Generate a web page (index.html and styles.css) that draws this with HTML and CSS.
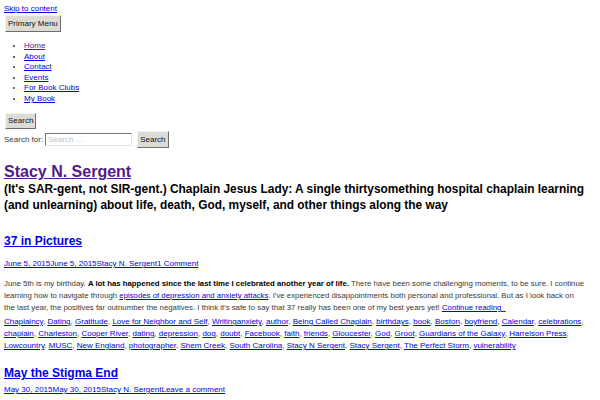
FILE: index.html
```html
<!DOCTYPE html>
<html lang="en">
<head>
<meta charset="utf-8">
<title>Stacy N. Sergent</title>
<link rel="stylesheet" href="styles.css">
</head>
<body>
<a class="skip" href="#content">Skip to content</a>
<header class="site-header">
  <nav class="main-nav">
    <button class="btn menu-toggle" type="button">Primary Menu</button>
    <ul class="menu">
      <li><a class="visited" href="#">Home</a></li>
      <li><a href="#">About</a></li>
      <li><a href="#">Contact</a></li>
      <li><a href="#">Events</a></li>
      <li><a href="#">For Book Clubs</a></li>
      <li><a href="#">My Book</a></li>
    </ul>
  </nav>
  <button class="btn search-toggle" type="button">Search</button>
  <form class="search-form">
    <label class="search-label">Search for: <input class="search-field" type="search" placeholder="Search …"></label>
    <button class="btn search-submit" type="button">Search</button>
  </form>
  <p class="site-title"><a class="visited" href="#">Stacy N. Sergent</a></p>
  <p class="site-description">(It's SAR-gent, not SIR-gent.) Chaplain Jesus Lady: A single thirtysomething hospital chaplain learning (and unlearning) about life, death, God, myself, and other things along the way</p>
</header>
<main id="content" class="content">
  <article class="post">
    <h2 class="entry-title"><a href="#">37 in Pictures</a></h2>
    <div class="entry-meta"><a href="#">June 5, 2015June 5, 2015</a><a href="#">Stacy N. Sergent</a><a href="#">1 Comment</a></div>
    <p class="entry-text">June 5th is my birthday. <strong>A lot has happened since the last time I celebrated another year of life.</strong> There have been some challenging moments, to be sure. I continue learning how to navigate through <a href="#">episodes of depression and anxiety attacks</a>. I've experienced disappointments both personal and professional. But as I look back on the last year, the positives far outnumber the negatives. I think it's safe to say that 37 really has been one of my best years yet! <a href="#">Continue reading&nbsp;<span class="arrow">&nbsp;</span></a></p>
    <p class="tags"><a href="#">Chaplaincy</a>, <a href="#">Dating</a>, <a href="#">Gratitude</a>, <a href="#">Love for Neighbor and Self</a>, <a href="#">Writinganxiety</a>, <a href="#">author</a>, <a href="#">Being Called Chaplain</a>, <a href="#">birthdays</a>, <a href="#">book</a>, <a href="#">Boston</a>, <a href="#">boyfriend</a>, <a href="#">Calendar</a>, <a href="#">celebrations</a>, <a href="#">chaplain</a>, <a href="#">Charleston</a>, <a href="#">Cooper River</a>, <a href="#">dating</a>, <a href="#">depression</a>, <a href="#">dog</a>, <a href="#">doubt</a>, <a href="#">Facebook</a>, <a href="#">faith</a>, <a href="#">friends</a>, <a href="#">Gloucester</a>, <a href="#">God</a>, <a href="#">Groot</a>, <a href="#">Guardians of the Galaxy</a>, <a href="#">Harrelson Press</a>, <a href="#">Lowcountry</a>, <a href="#">MUSC</a>, <a href="#">New England</a>, <a href="#">photographer</a>, <a href="#">Shem Creek</a>, <a href="#">South Carolina</a>, <a href="#">Stacy N Sergent</a>, <a href="#">Stacy Sergent</a>, <a href="#">The Perfect Storm</a>, <a href="#">vulnerability</a></p>
  </article>
  <article class="post">
    <h2 class="entry-title"><a href="#">May the Stigma End</a></h2>
    <div class="entry-meta"><a href="#">May 30, 2015May 30, 2015</a><a href="#">Stacy N. Sergent</a><a href="#">Leave a comment</a></div>
  </article>
</main>
</body>
</html>
```
FILE: styles.css
```css
html { background: #fff; }
body {
  margin: 0;
  padding: 4px 4px 0;
  font-family: "Liberation Sans", Arial, sans-serif;
  font-size: 8px;
  line-height: 10px;
  color: #3a3a3a;
}
a { color: #0000ee; }
a.visited { color: #551a8b; }
.skip { display: inline-block; }
.btn {
  display: block;
  font-family: "Liberation Sans", Arial, sans-serif;
  font-size: 8px;
  line-height: 10px;
  color: #111;
  background: #dddbd6;
  border: 1px solid;
  border-color: #f2f2f0 #6f6f6f #6f6f6f #f2f2f0;
  padding: 0 2px;
  margin: 0;
}
.menu-toggle { margin: 1px 0 0 1px; height: 17px; padding: 0 2px; }
.menu {
  margin: 9px 0 0;
  padding-left: 20px;
  line-height: 10.6px;
}
.search-toggle { margin: 8.5px 0 0 1px; height: 16px; }
.search-form {
  display: flex;
  align-items: center;
  margin: 2px 0 0;
  height: 17px;
}
.search-label { display: flex; align-items: center; gap: 2px; }
.search-field {
  width: 87px;
  height: 13px;
  box-sizing: border-box;
  font-family: "Liberation Sans", Arial, sans-serif;
  font-size: 8px;
  padding: 0 2px;
  border: 1px solid;
  border-color: #767676 #e4e4e4 #e4e4e4 #767676;
  background: #fff;
  margin: 0;
}
.search-field::placeholder { color: #c4c4c4; }
.search-submit { margin-left: 5px; height: 17px; }
.site-title {
  margin: 14px 0 0;
  font-size: 16px;
  line-height: 19px;
  font-weight: bold;
}
.site-description {
  margin: 0;
  font-size: 11.9px;
  line-height: 16px;
  font-weight: bold;
  color: #000;
}
.entry-title {
  margin: 21px 0 0;
  font-size: 12px;
  line-height: 14px;
  font-weight: bold;
}
.post + .post .entry-title { margin-top: 14px; }
.entry-meta { margin: 11px 0 0; line-height: 10px; }
.post + .post .entry-meta { margin-top: 5px; }
.entry-text { margin: 9px 0 0; padding-right: 11px; font-size: 7.8px; line-height: 12px; }
.entry-text strong { color: #000; }
.tags { margin: 2px 0 0; line-height: 12px; }
.arrow { display: inline; }
```
